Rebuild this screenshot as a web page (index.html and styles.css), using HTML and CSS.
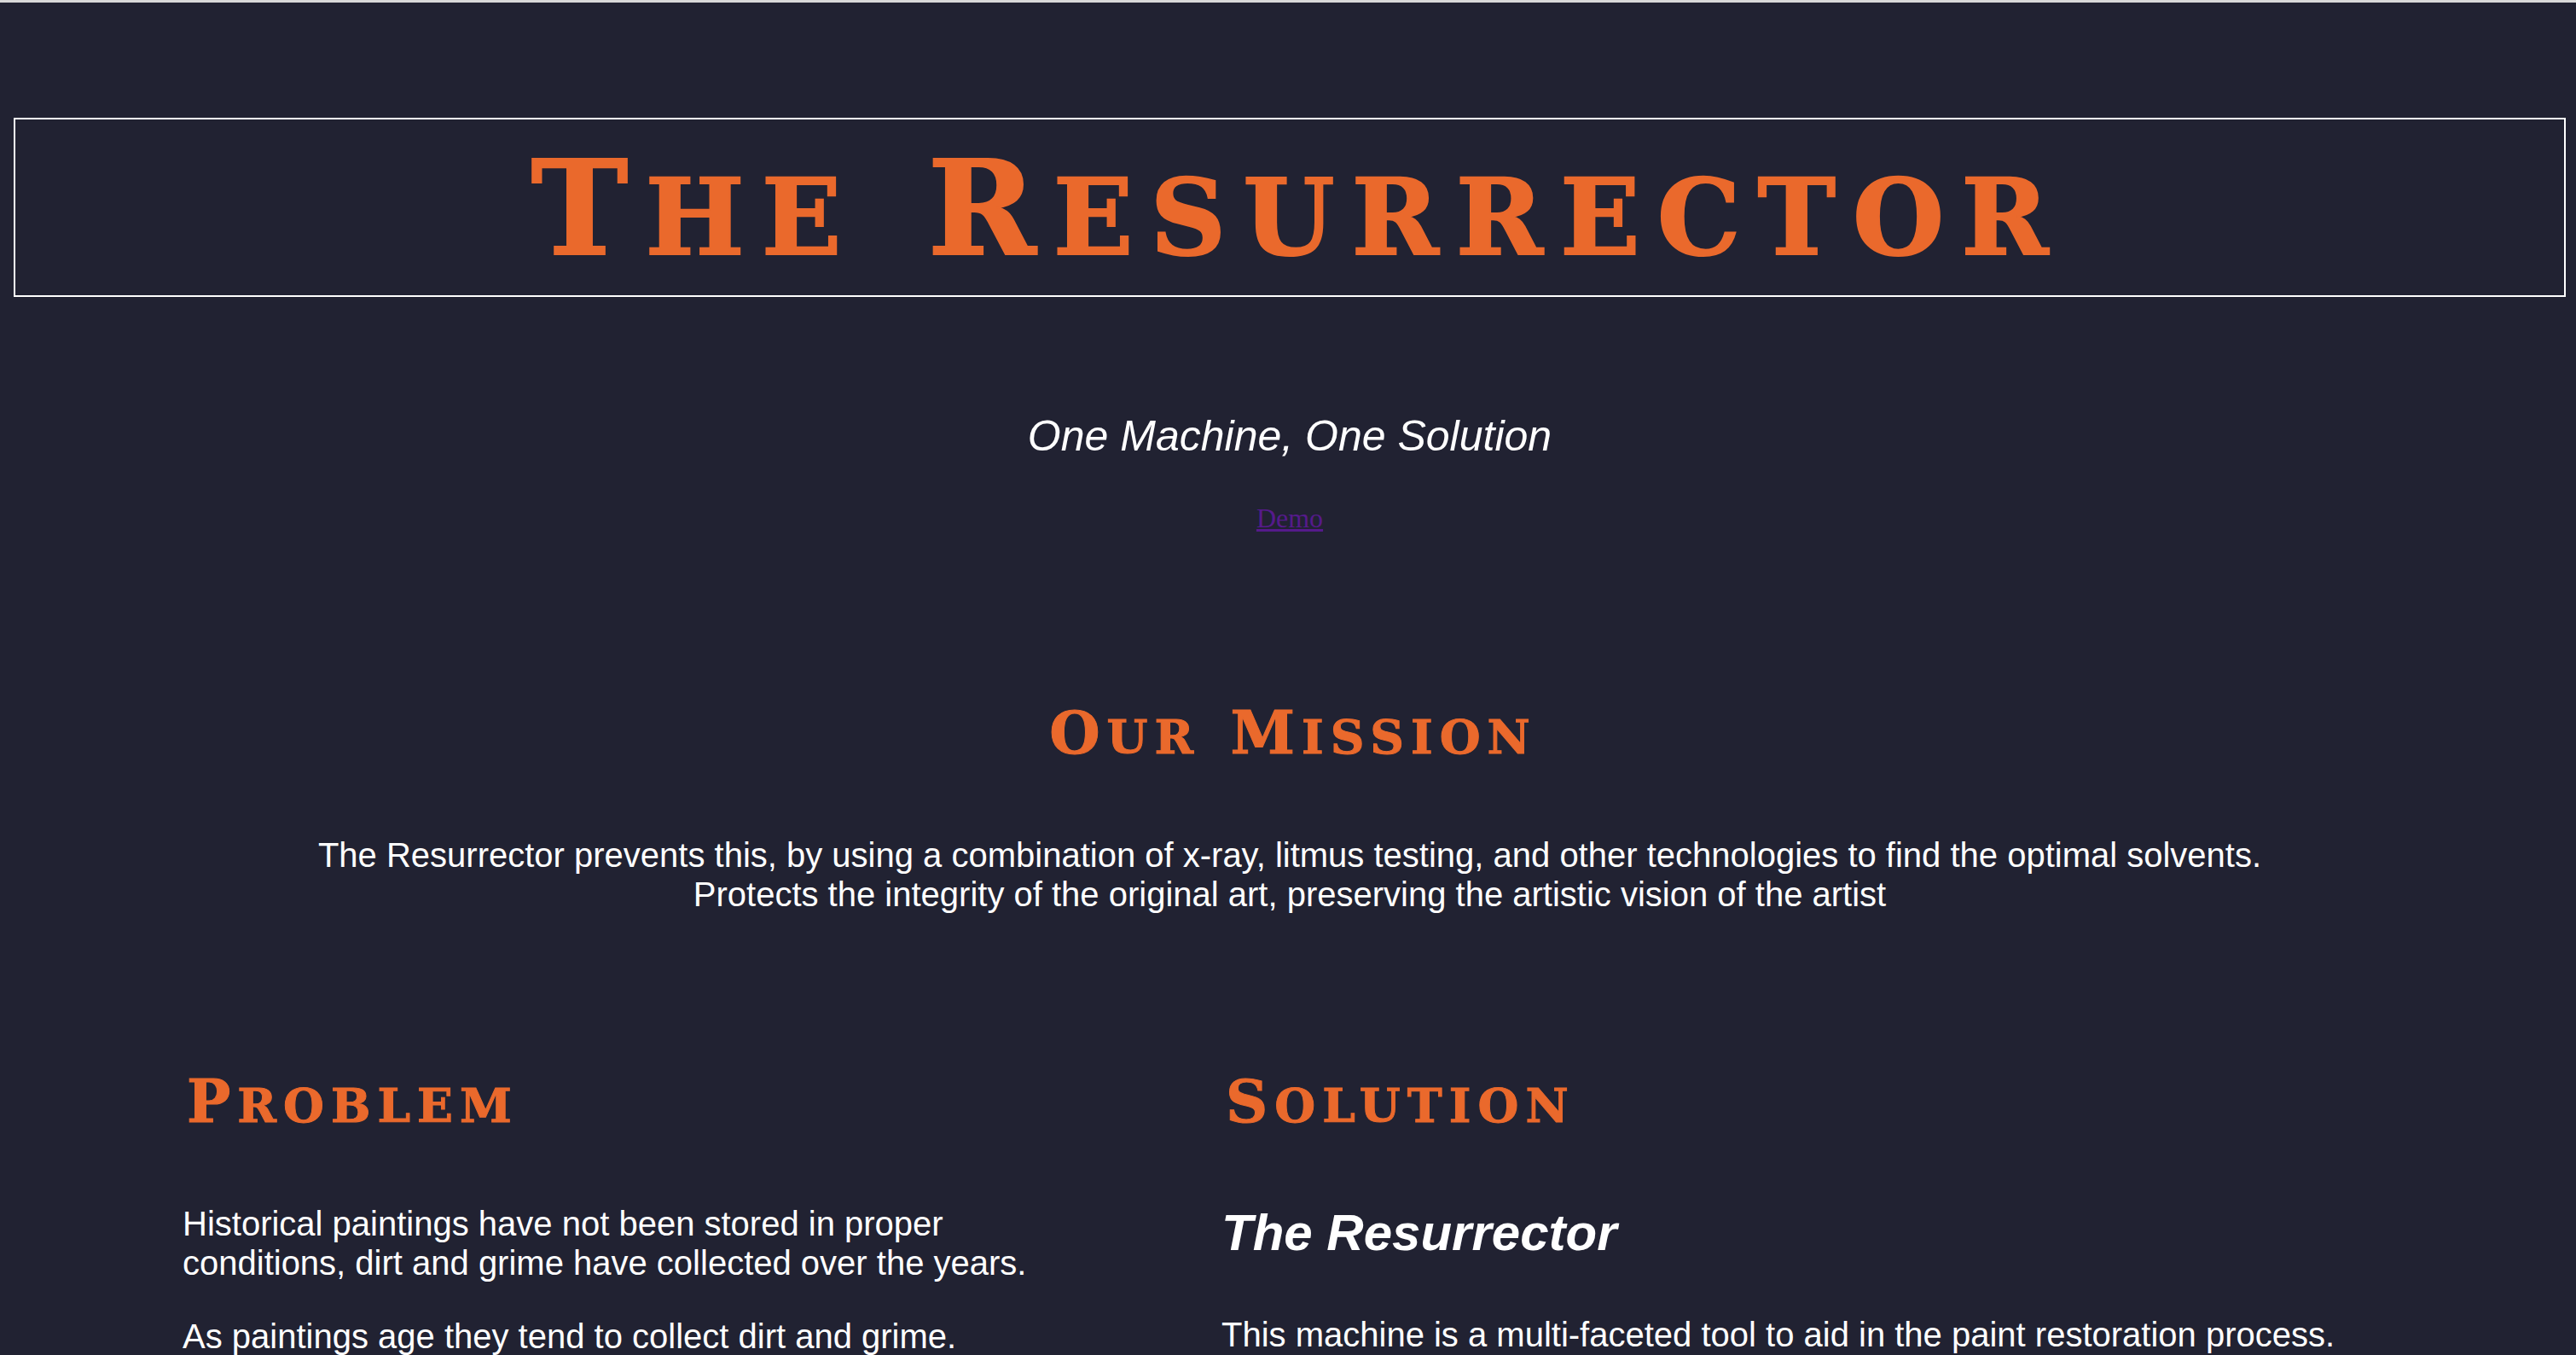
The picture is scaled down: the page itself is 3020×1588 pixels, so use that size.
FILE: index.html
```html
<!DOCTYPE html>
<html lang="en">
<head>
<meta charset="utf-8">
<title>The Resurrector</title>
<link rel="stylesheet" href="styles.css">
</head>
<body>
  <header class="masthead">
    <h1 class="title"><span class="cap">T</span>he <span class="cap">R</span>esurrector</h1>
  </header>

  <section class="intro">
    <p class="tagline">One Machine, One Solution</p>
    <p class="demo-row"><a class="demo" href="#">Demo</a></p>
  </section>

  <section class="mission">
    <h2 class="heading"><span class="cap">O</span>ur <span class="cap">M</span>ission</h2>
    <p class="mission-text">The Resurrector prevents this, by using a combination of x-ray, litmus testing, and other technologies to find the optimal solvents.<br>Protects the integrity of the original art, preserving the artistic vision of the artist</p>
  </section>

  <section class="columns">
    <div class="col col-problem">
      <h2 class="heading col-heading"><span class="cap">P</span>roblem</h2>
      <p class="body-text first">Historical paintings have not been stored in proper conditions, dirt and grime have collected over the years.</p>
      <p class="body-text">As paintings age they tend to collect dirt and grime.</p>
    </div>
    <div class="col col-solution">
      <h2 class="heading col-heading"><span class="cap">S</span>olution</h2>
      <h3 class="product">The Resurrector</h3>
      <p class="body-text after-product">This machine is a multi-faceted tool to aid in the paint restoration process.</p>
    </div>
  </section>
</body>
</html>
```

FILE: styles.css
```css
html {
  background: #212232;
}

body {
  margin: 0;
  padding: 0 12px 0 16px;
  border-top: 3px solid #d9d9d9;
  font-family: "Liberation Sans", Arial, Helvetica, sans-serif;
  color: #ffffff;
  overflow: hidden;
  height: 1585px;
}

.masthead {
  margin-top: 135px;
  border: 2px solid #ffffff;
  padding: 9px 0 22px;
}

.title {
  margin: 0;
  padding-left: 20px;
  text-align: center;
  font-family: "DejaVu Serif", "Liberation Serif", serif;
  font-weight: bold;
  font-variant: small-caps;
  font-size: 175px;
  line-height: 1;
  color: #ea692c;
  letter-spacing: 20px;
  -webkit-text-stroke: 2px #ea692c;
}

.title .cap,
.heading .cap {
  font-size: 0.875em;
}

.intro {
  text-align: center;
}

.tagline {
  margin: 135px 0 0;
  font-style: italic;
  font-size: 50px;
  line-height: 56px;
}

.demo-row {
  margin: 50px 0 0;
  font-family: "Liberation Serif", "Times New Roman", serif;
  font-size: 32px;
  line-height: 36px;
}

.demo {
  color: #551a8b;
}

.heading {
  margin: 0;
  font-family: "DejaVu Serif", "Liberation Serif", serif;
  font-weight: bold;
  font-variant: small-caps;
  font-size: 78px;
  line-height: 1;
  letter-spacing: 8px;
  color: #ea692c;
  -webkit-text-stroke: 1px #ea692c;
}

.mission {
  text-align: center;
}

.mission .heading {
  margin-top: 192px;
  padding-left: 8px;
}

.col-heading {
  padding-left: 5px;
}

.mission-text {
  margin: 84px 0 0;
  font-size: 40px;
  line-height: 46px;
}

.columns {
  display: grid;
  grid-template-columns: 1050px auto;
  column-gap: 168px;
  padding-left: 198px;
  margin-top: 178px;
}

.body-text {
  margin: 40px 0 0;
  font-size: 40px;
  line-height: 46px;
}

.body-text.first {
  margin-top: 84px;
}

.product {
  margin: 85px 0 0;
  font-style: italic;
  font-weight: bold;
  font-size: 60px;
  line-height: 66px;
}

.body-text.after-product {
  margin-top: 63px;
}
```
